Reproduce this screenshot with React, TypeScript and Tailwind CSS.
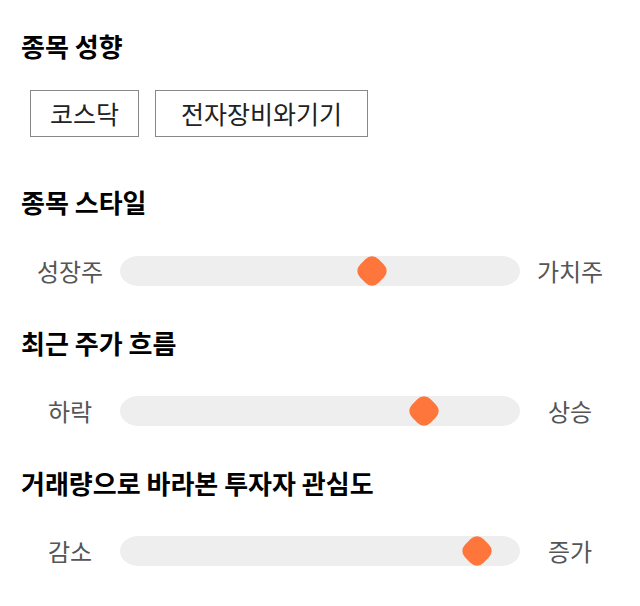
import React from "react";

const font = { fontFamily: '"Noto Sans CJK KR", "Noto Sans", sans-serif' };

function Slider({ left, right, pct }: { left: string; right: string; pct: number }) {
  return (
    <div className="flex items-center h-[30px]">
      <div className="w-[100px] text-center text-[24px] text-[#555] leading-none">{left}</div>
      <div className="relative flex-1 h-[30px] bg-[#eeeeee] rounded-[18px/15px]">
        <div
          className="absolute top-1/2 w-[26px] h-[26px] -translate-x-1/2 -translate-y-1/2 rotate-45 rounded-[9px] bg-[#ff763d]"
          style={{ left: `${pct}%` }}
        />
      </div>
      <div className="w-[100px] text-center text-[24px] text-[#555] leading-none">{right}</div>
    </div>
  );
}

export default function App() {
  return (
    <div className="w-[640px] h-[606px] bg-white px-5 pt-[33px] text-black" style={font}>
      <h2 className="text-[26px] font-bold leading-[26px] ml-[1px]">종목 성향</h2>
      <div className="flex gap-4 mt-[31px] ml-[10px]">
        <div className="h-[47px] w-[109px] border border-[#888] flex items-center justify-center text-[25px] text-[#222]">코스닥</div>
        <div className="h-[47px] w-[213px] border border-[#888] flex items-center justify-center text-[25px] text-[#222]">전자장비와기기</div>
      </div>
      <h2 className="text-[26px] font-bold leading-[26px] ml-[1px] mt-[52px]">종목 스타일</h2>
      <div className="mt-[41px]">
        <Slider left="성장주" right="가치주" pct={63.1} />
      </div>
      <h2 className="text-[26px] font-bold leading-[26px] ml-[1px] mt-[44px]">최근 주가 흐름</h2>
      <div className="mt-[40px]">
        <Slider left="하락" right="상승" pct={76} />
      </div>
      <h2 className="text-[26px] font-bold leading-[26px] ml-[1px] mt-[44px]">거래량으로 바라본 투자자 관심도</h2>
      <div className="mt-[40px]">
        <Slider left="감소" right="증가" pct={89.25} />
      </div>
    </div>
  );
}
